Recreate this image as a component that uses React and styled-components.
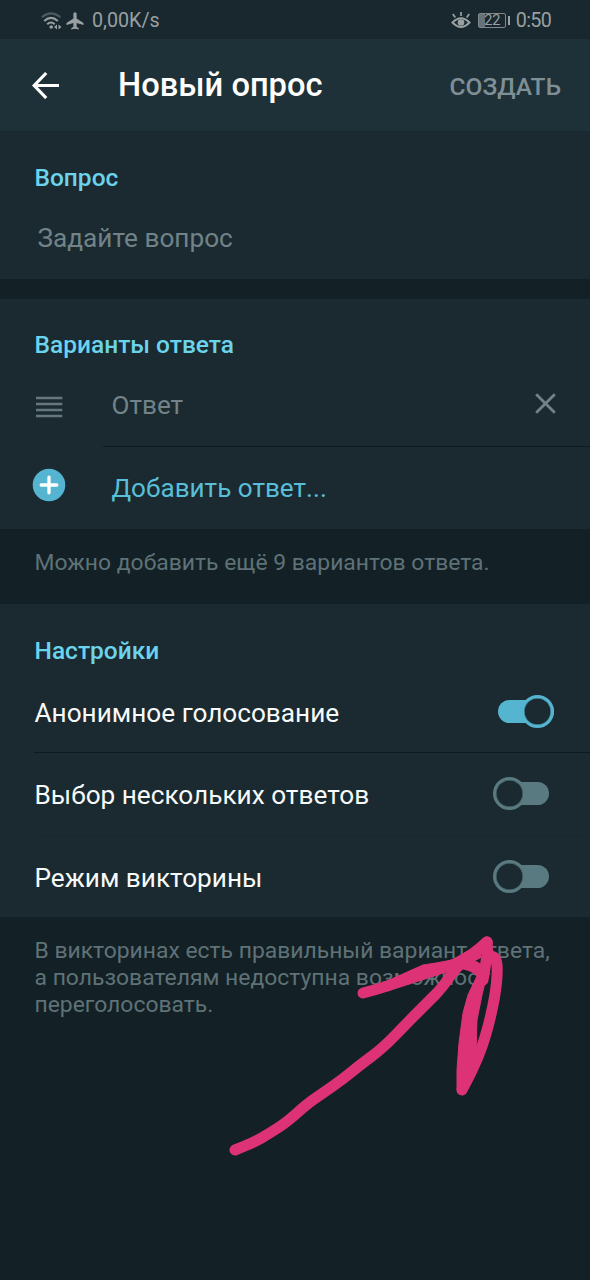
import React, { useState } from 'react';
import styled, { createGlobalStyle } from 'styled-components';

const GlobalStyle = createGlobalStyle`
    * {
        box-sizing: border-box;
    }
    body {
        margin: 0;
        background: #132025;
        font-family: Roboto, sans-serif;
    }
`;

const Screen = styled.div`
    position: relative;
    width: 590px;
    height: 1280px;
    overflow: hidden;
    background: #132025;
`;

const StatusBar = styled.div`
    display: flex;
    align-items: center;
    height: 39px;
    padding: 2px 39px 0 41px;
    background: #19282e;
    color: #98a0a3;
    font-size: 19.7px;
    line-height: 24px;
`;

const Speed = styled.span`
    margin-left: 8.5px;
`;

const Clock = styled.span`
    margin-left: 6px;
    letter-spacing: -0.7px;
`;

const StatusRight = styled.div`
    display: flex;
    align-items: center;
    margin-left: auto;
`;

const Battery = styled.div`
    display: flex;
    align-items: center;
    justify-content: center;
    width: 28px;
    height: 15px;
    margin-left: 7px;
    border: 1px solid #7f898d;
    border-radius: 2px;
    background: linear-gradient(to right, #66727a 22%, transparent 22%);
    font-size: 14.5px;
    line-height: 14px;
`;

const BatteryCap = styled.div`
    width: 2px;
    height: 9px;
    margin-left: 1.5px;
    background: #98a0a3;
`;

const Toolbar = styled.header`
    display: flex;
    align-items: center;
    height: 92px;
    padding: 0 29px 0 32px;
    background: #1f3138;
`;

const Title = styled.h1`
    margin: 0 auto 0 58px;
    font-weight: 500;
    font-size: 32.7px;
    line-height: 40px;
    color: #fff;
`;

const CreateButton = styled.button`
    padding: 3px 0 0;
    border: 0;
    background: none;
    font-family: inherit;
    font-weight: 500;
    font-size: 24.5px;
    line-height: 30px;
    color: #7f8f95;
`;

const Section = styled.section`
    height: ${props => props.height};
    margin-top: ${props => props.gap || "0"};
    padding-top: ${props => props.top || "33px"};
    background: #1a2a30;
`;

const SectionTitle = styled.h2`
    height: 28px;
    margin: 0;
    padding-left: 34.5px;
    font-weight: 500;
    font-size: 24.5px;
    line-height: 28px;
    color: #6bd4ec;
`;

const QuestionInput = styled.div`
    margin-top: 30px;
    padding-left: 37.5px;
    font-size: 26.2px;
    line-height: 32px;
    color: #718388;
`;

const AnswerRow = styled.div`
    display: flex;
    align-items: center;
    height: ${props => props.height};
    padding: 0 34px 0 32px;
`;

const IconSlot = styled.div`
    display: flex;
    flex: 0 0 ${props => props.width || "auto"};
    padding: ${props => props.pad || "0"};
`;

const AnswerText = styled.div`
    flex: 1;
    padding-top: ${props => props.drop || "0"};
    font-size: 26.1px;
    line-height: 32px;
    color: ${props => props.accent ? "#59bfd8" : "#718388"};
`;

const Divider = styled.div`
    height: 1px;
    margin-left: ${props => props.inset};
    background: ${props => props.faint ? "#18272d" : "#0f191e"};
`;

const Hint = styled.p`
    margin: 0;
    padding: ${props => props.pad};
    font-size: 22.9px;
    line-height: 27px;
    color: #5f7277;
    white-space: pre-line;
`;

const SettingRow = styled.div`
    display: flex;
    align-items: center;
    justify-content: space-between;
    height: ${props => props.height};
    padding: ${props => props.top} 36px 0 34.5px;
    font-size: 26.2px;
    line-height: 32px;
    color: #f7fafa;
`;

const Switch = styled.button`
    display: flex;
    align-items: center;
    justify-content: ${props => props.on ? "flex-end" : "flex-start"};
    width: ${props => props.on ? "56px" : "51px"};
    height: 23px;
    margin: 0 ${props => props.on ? "0" : "5px"} 3px 0;
    padding: 0;
    border: 0;
    border-radius: 12px;
    background: ${props => props.on ? "#55b4d0" : "#597a80"};
`;

const Knob = styled.span`
    flex: none;
    width: 33px;
    height: 33px;
    margin-left: ${props => props.on ? "0" : "-5px"};
    border: 3px solid ${props => props.on ? "#55b4d0" : "#597a80"};
    border-radius: 50%;
    box-shadow: inset 0 0 0 0.5px ${props => props.on ? "#55b4d0" : "#597a80"};
    background: #1a2a30;
`;

// freehand note drawn above the page
const Scribble = styled.svg`
    position: absolute;
    left: 0;
    top: 900px;
    pointer-events: none;
`;

const WifiIcon = () => (
    <svg width="21" height="18" viewBox="0 0 21 18" fill="none" strokeWidth="2">
        <path d="M.8 5.2Q10 -2.4 19.4 5.2" stroke="#4c595f" />
        <path d="M3.2 9Q10 2.8 16.8 9M6.2 12.3Q10 8.8 13.6 12.3" stroke="#98a0a3" />
        <circle cx="10.2" cy="15" r="1.8" fill="#98a0a3" />
        <path d="M16 12.5v5l-3-2.5zM17.5 12.5v5l3-2.5z" fill="#98a0a3" />
    </svg>
);

const PlaneSvg = styled.svg`
    margin-left: 3.5px;
    fill: #98a0a3;
`;

const PlaneIcon = () => (
    <PlaneSvg width="18" height="18" viewBox="0 0 18 18">
        <path d="M9 .3C8 .3 7.4 1.2 7.4 2v4.6L.5 11v2l6.9-2v3.8l-2.2 1.5v1.3L9 16.7l3.8.9v-1.3l-2.2-1.5V11l6.9 2V11l-6.9-4.4V2C10.6 1.2 10 .3 9 .3z" />
    </PlaneSvg>
);

const EyeIcon = () => (
    <svg width="20" height="18" viewBox="0 0 20 18" fill="none" stroke="#98a0a3" strokeWidth="2">
        <path d="M1.5 10.5Q10 2 18.5 10.5Q10 19.5 1.5 10.5z" />
        <path d="M10 0v4M1.8 2l2.5 3.5M18.2 2l-2.5 3.5" strokeWidth="1.7" />
        <circle cx="10" cy="10.5" r="3.3" fill="#98a0a3" stroke="none" />
    </svg>
);

const BackIcon = () => (
    <svg width="28" height="28" viewBox="0 0 28 28" fill="none" stroke="#fff" strokeWidth="3.2">
        <path d="M27 14.5H3M14.2 2L2.2 14.5L14.2 27" />
    </svg>
);

const DragIcon = () => (
    <svg width="34" height="24" viewBox="0 0 34 24" stroke="#65777d" strokeWidth="2.4">
        <path d="M4 3H30.3M4 9H30.3M4 15H30.3M4 21H30.3" />
    </svg>
);

const PlusIcon = () => (
    <svg width="34" height="34" viewBox="0 0 34 34">
        <circle cx="17" cy="17" r="16.3" fill="#55b4d0" />
        <path d="M17 9.2V24.8M9.2 17H24.8" stroke="#fff" strokeWidth="3.3" strokeLinecap="round" />
    </svg>
);

const CloseIcon = () => (
    <svg width="21" height="21" viewBox="0 0 21 21" stroke="#718388" strokeWidth="2.8">
        <path d="M1.2 1.2L19.8 19.8M19.8 1.2L1.2 19.8" />
    </svg>
);

// quadratic curve through the midpoints of a list of points
const smooth = points => {
    const last = points[points.length - 1];
    let d = `M${points[0]}`;
    for (let i = 1; i < points.length - 1; i++) {
        const [x, y] = points[i];
        const [nx, ny] = points[i + 1];
        d += `Q${x} ${y} ${(x + nx) / 2} ${(y + ny) / 2}`;
    }
    return `${d}L${last}`;
};

const shaft = [
    [235, 1150], [253, 1143], [270, 1133], [287, 1122], [307, 1104], [323, 1093], [343, 1079],
    [360, 1065], [383, 1048], [410, 1020], [428, 1002], [442, 988], [457, 966], [473, 955], [487, 942],
];
const barb = [[363, 993], [390, 986], [423, 972], [452, 966], [472, 955], [487, 942]];
const loop = [
    [487, 944], [487, 956], [497, 957], [497.4, 980], [492, 1012],
    [483, 1045], [472, 1071], [462, 1090],
];

const App = () => {
    const [settings, setSettings] = useState([
        { label: 'Анонимное голосование', on: true, height: '87px', top: '8px' },
        { label: 'Выбор нескольких ответов', on: false, height: '82px', top: '2px' },
        { label: 'Режим викторины', on: false, height: '82px', top: '1px' },
    ]);

    const toggle = index => setSettings(
        settings.map((item, i) => i === index ? { ...item, on: !item.on } : item)
    );

    return (
        <Screen>
            <GlobalStyle />
            <StatusBar>
                <WifiIcon />
                <PlaneIcon />
                <Speed>0,00K/s</Speed>
                <StatusRight>
                    <EyeIcon />
                    <Battery>22</Battery>
                    <BatteryCap />
                    <Clock>0:50</Clock>
                </StatusRight>
            </StatusBar>
            <Toolbar>
                <BackIcon />
                <Title>Новый опрос</Title>
                <CreateButton>СОЗДАТЬ</CreateButton>
            </Toolbar>

            <Section height="148px">
                <SectionTitle>Вопрос</SectionTitle>
                <QuestionInput>Задайте вопрос</QuestionInput>
            </Section>

            <Section height="230px" gap="20px" top="32px">
                <SectionTitle>Варианты ответа</SectionTitle>
                <AnswerRow height="87px">
                    <IconSlot width="79.5px" pad="8px 0 0"><DragIcon /></IconSlot>
                    <AnswerText drop="5px">Ответ</AnswerText>
                    <IconSlot pad="2px 0 0"><CloseIcon /></IconSlot>
                </AnswerRow>
                <Divider inset="103px" />
                <AnswerRow height="78px">
                    <IconSlot width="79.5px" pad="0 0 3px"><PlusIcon /></IconSlot>
                    <AnswerText accent drop="3px">Добавить ответ...</AnswerText>
                </AnswerRow>
            </Section>
            <Hint pad="20px 34.5px 28px">Можно добавить ещё 9 вариантов ответа.</Hint>

            <Section height="313px">
                <SectionTitle>Настройки</SectionTitle>
                {settings.map((item, i) => (
                    <React.Fragment key={item.label}>
                        {i > 0 && <Divider inset="34px" faint={i > 1} />}
                        <SettingRow height={item.height} top={item.top}>
                            {item.label}
                            <Switch on={item.on} onClick={() => toggle(i)}>
                                <Knob on={item.on} />
                            </Switch>
                        </SettingRow>
                    </React.Fragment>
                ))}
            </Section>
            <Hint pad="20px 0 0 34.5px">
                {'В викторинах есть правильный вариант ответа,\nа пользователям недоступна возможность\nпереголосовать.'}
            </Hint>

            <Scribble width="590" height="300" viewBox="0 900 590 300" fill="none" stroke="#dd3376" strokeWidth="11" strokeLinecap="round" strokeLinejoin="round">
                <path d={smooth(shaft)} />
                <path d={smooth(barb)} />
                <path d={smooth(loop)} />
                <path d="M487 942V956L483 980" />
                <path
                    d="M385 982L405 973L423 965L436 963L452 960L473 948L482 957L474 961Q483 963 481 970L486 958L488 970L482 995L477 1020L476 1055L467 1090L457 1090L457 1070L459 1043L463 1013L468 995L477 976Q471 969 456 968L440 974L425 979L400 987z"
                    fill="#dd3376"
                    strokeWidth="1"
                />
            </Scribble>
        </Screen>
    );
};

export default App;
